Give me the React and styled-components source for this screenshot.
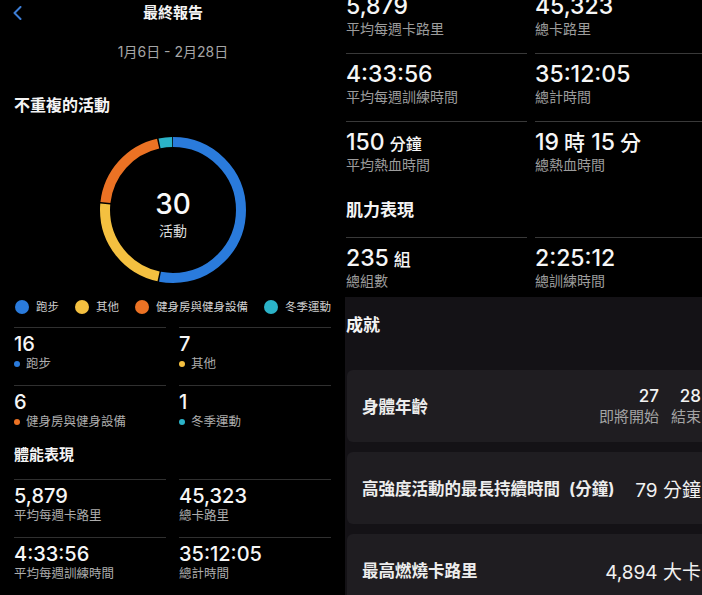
import React from 'react';
import styled, { createGlobalStyle } from 'styled-components';

const GlobalStyle = createGlobalStyle`
  html, body {
    margin: 0;
    padding: 0;
    background: #000;
  }
  body {
    font-family: Inter, "Noto Sans CJK TC", sans-serif;
    color: #f2f2f2;
    -webkit-font-smoothing: antialiased;
  }
`;

const COLORS = {
  run: '#2a7bdc',
  other: '#f4c040',
  gym: '#eb7224',
  winter: '#2bb3c8',
};

const Page = styled.div`
  display: flex;
  width: 702px;
  height: 595px;
  overflow: hidden;
  background: #000;
`;

/* ---------- left phone ---------- */

const LeftPhone = styled.section`
  width: 335px;
  flex-shrink: 0;
  box-sizing: border-box;
  padding: 0 3px 0 14px;
  display: flex;
  flex-direction: column;
`;

const Header = styled.header`
  display: grid;
  grid-template-columns: 30px 1fr 30px;
  align-items: center;
  height: 26px;
`;

const BackButton = styled.button`
  display: flex;
  align-items: center;
  padding: 0;
  margin-left: -1px;
  border: 0;
  background: none;
  color: #3d7ed6;
`;

const Title = styled.h1`
  margin: 0;
  text-align: center;
  font-size: 15px;
  font-weight: 700;
  line-height: 26px;
  color: #f4f4f4;
`;

const DateRange = styled.div`
  margin-top: 16px;
  text-align: center;
  font-size: 14px;
  line-height: 20px;
  color: #a6a6a6;
`;

const SectionTitle = styled.h2`
  margin: ${(p) => p.$top || 0}px 0 ${(p) => p.$bottom || 0}px;
  font-size: ${(p) => p.$size || 16}px;
  font-weight: 700;
  line-height: 22px;
  color: #f4f4f4;
`;

const DonutWrap = styled.div`
  margin-top: 21px;
  display: grid;
  place-items: center;
  height: 146px;
  & > * {
    grid-area: 1 / 1;
  }
`;

const DonutCenter = styled.div`
  display: flex;
  flex-direction: column;
  align-items: center;
  padding-top: 7px;
`;

const DonutValue = styled.div`
  font-size: 28px;
  font-weight: 500;
  line-height: 32px;
  color: #fafafa;
`;

const DonutLabel = styled.div`
  margin-top: 2px;
  font-size: 14px;
  line-height: 18px;
  color: #dcdcdc;
`;

const Legend = styled.ul`
  margin: 16px 0 0;
  padding: 0;
  list-style: none;
  display: flex;
  justify-content: center;
  gap: 16px;
`;

const LegendItem = styled.li`
  display: flex;
  align-items: center;
  gap: 7px;
  font-size: 11.5px;
  line-height: 16px;
  color: #cfcfcf;
`;

const Dot = styled.span`
  width: ${(p) => p.$size}px;
  height: ${(p) => p.$size}px;
  border-radius: 50%;
  background: ${(p) => p.$color};
  flex-shrink: 0;
`;

const StatGrid = styled.div`
  margin-top: ${(p) => p.$top || 0}px;
  display: grid;
  grid-template-columns: 152px 152px;
  column-gap: 13px;
`;

const StatCell = styled.div`
  border-top: 1px solid #303030;
  padding: 4px 0 13px;
`;

const StatValue = styled.div`
  font-size: 20px;
  font-weight: 500;
  line-height: 24px;
  color: #f6f6f6;
`;

const StatLabel = styled.div`
  display: flex;
  align-items: center;
  gap: 6px;
  font-size: 12.5px;
  line-height: 16px;
  color: #adadad;
`;

/* ---------- right phone ---------- */

const RightPhone = styled.section`
  flex: 1;
  min-width: 0;
  display: flex;
  flex-direction: column;
  overflow: hidden;
`;

const RightTop = styled.div`
  height: 297px;
  flex-shrink: 0;
  overflow: hidden;
  padding-left: 11px;
`;

const ScrolledContent = styled.div`
  margin-top: -15px;
`;

const BigGrid = styled.div`
  display: grid;
  grid-template-columns: 181px 181px;
  column-gap: 8px;
`;

const BigCell = styled.div`
  border-top: 1px solid #393939;
  padding: 7px 0 15px;
`;

const BigValue = styled.div`
  height: 26px;
  font-size: 23px;
  font-weight: 500;
  line-height: 26px;
  color: #f6f6f6;
  white-space: nowrap;
`;

const Unit = styled.span`
  font-size: ${(p) => p.$size}px;
  line-height: 1;
  margin-left: 5px;
`;

const BigLabel = styled.div`
  margin-top: 1px;
  font-size: 14px;
  line-height: 18px;
  color: #9c9c9c;
`;

const Achievements = styled.div`
  flex: 1;
  margin-left: 10px;
  padding: 17px 0 0 1px;
  background: #141216;
  display: flex;
  flex-direction: column;
  align-items: flex-start;
`;

const CardList = styled.div`
  margin-top: 34px;
  display: flex;
  flex-direction: column;
  gap: 10px;
`;

const Card = styled.div`
  box-sizing: border-box;
  width: 369px;
  height: 72px;
  margin-left: 1px;
  padding: 0 15px;
  display: flex;
  align-items: center;
  justify-content: space-between;
  background: #1f1d21;
  border-radius: 6px;
`;

const CardTitle = styled.div`
  font-size: 16.5px;
  font-weight: 700;
  color: #ededed;
  white-space: nowrap;
  word-spacing: 5px;
`;

const CardValue = styled.div`
  font-size: 19px;
  color: #f0f0f0;
  white-space: nowrap;
`;

const AgeGroups = styled.div`
  display: flex;
  gap: 12px;
`;

const AgeGroup = styled.div`
  display: flex;
  flex-direction: column;
  align-items: flex-end;
`;

const AgeNumber = styled.div`
  font-size: 17px;
  font-weight: 500;
  line-height: 22px;
  color: #f2f2f2;
`;

const AgeLabel = styled.div`
  font-size: 15px;
  line-height: 20px;
  color: #a4a4a4;
`;

/* ---------- donut chart ---------- */

const segments = [
  { value: 16, color: COLORS.run },
  { value: 7, color: COLORS.other },
  { value: 6, color: COLORS.gym },
  { value: 1, color: COLORS.winter },
];

function Donut() {
  const size = 146;
  const r = 68;
  const c = 2 * Math.PI * r;
  const total = segments.reduce((s, x) => s + x.value, 0);
  const gap = 1.5;
  let offset = 0;
  return (
    <svg width={size} height={size} viewBox={`0 0 ${size} ${size}`}>
      <g transform={`rotate(-90 ${size / 2} ${size / 2})`}>
        {segments.map((s, i) => {
          const len = (s.value / total) * c;
          const el = (
            <circle
              key={i}
              cx={size / 2}
              cy={size / 2}
              r={r}
              fill="none"
              stroke={s.color}
              strokeWidth={10}
              strokeDasharray={`${len - gap} ${c - len + gap}`}
              strokeDashoffset={-offset}
            />
          );
          offset += len;
          return el;
        })}
      </g>
    </svg>
  );
}

function ChevronLeft() {
  return (
    <svg width="9" height="14" viewBox="0 0 9 14">
      <polyline points="7.5,1 1.5,7 7.5,13" fill="none" stroke="currentColor" strokeWidth="2" strokeLinecap="round" strokeLinejoin="round" />
    </svg>
  );
}

const activityCounts = [
  { value: '16', label: '跑步', color: COLORS.run },
  { value: '7', label: '其他', color: COLORS.other },
  { value: '6', label: '健身房與健身設備', color: COLORS.gym },
  { value: '1', label: '冬季運動', color: COLORS.winter },
];

export default function App() {
  return (
    <>
      <GlobalStyle />
      <Page>
        <LeftPhone>
          <Header>
            <BackButton aria-label="返回">
              <ChevronLeft />
            </BackButton>
            <Title>最終報告</Title>
            <span />
          </Header>
          <DateRange>1月6日 - 2月28日</DateRange>

          <SectionTitle $top={32}>不重複的活動</SectionTitle>
          <DonutWrap>
            <Donut />
            <DonutCenter>
              <DonutValue>30</DonutValue>
              <DonutLabel>活動</DonutLabel>
            </DonutCenter>
          </DonutWrap>

          <Legend>
            {activityCounts.map((a) => (
              <LegendItem key={a.label}>
                <Dot $size={14} $color={a.color} />
                {a.label}
              </LegendItem>
            ))}
          </Legend>

          <StatGrid $top={12}>
            {activityCounts.map((a) => (
              <StatCell key={a.label}>
                <StatValue>{a.value}</StatValue>
                <StatLabel>
                  <Dot $size={6} $color={a.color} />
                  {a.label}
                </StatLabel>
              </StatCell>
            ))}
          </StatGrid>

          <SectionTitle $top={1} $bottom={13} $size={15}>體能表現</SectionTitle>
          <StatGrid>
            <StatCell>
              <StatValue>5,879</StatValue>
              <StatLabel>平均每週卡路里</StatLabel>
            </StatCell>
            <StatCell>
              <StatValue>45,323</StatValue>
              <StatLabel>總卡路里</StatLabel>
            </StatCell>
            <StatCell>
              <StatValue>4:33:56</StatValue>
              <StatLabel>平均每週訓練時間</StatLabel>
            </StatCell>
            <StatCell>
              <StatValue>35:12:05</StatValue>
              <StatLabel>總計時間</StatLabel>
            </StatCell>
          </StatGrid>
        </LeftPhone>

        <RightPhone>
          <RightTop>
            <ScrolledContent>
              <BigGrid>
                <BigCell>
                  <BigValue>5,879</BigValue>
                  <BigLabel>平均每週卡路里</BigLabel>
                </BigCell>
                <BigCell>
                  <BigValue>45,323</BigValue>
                  <BigLabel>總卡路里</BigLabel>
                </BigCell>
                <BigCell>
                  <BigValue>4:33:56</BigValue>
                  <BigLabel>平均每週訓練時間</BigLabel>
                </BigCell>
                <BigCell>
                  <BigValue>35:12:05</BigValue>
                  <BigLabel>總計時間</BigLabel>
                </BigCell>
                <BigCell>
                  <BigValue>
                    150<Unit $size={16}>分鐘</Unit>
                  </BigValue>
                  <BigLabel>平均熱血時間</BigLabel>
                </BigCell>
                <BigCell>
                  <BigValue>
                    19<Unit $size={21}>時</Unit> 15<Unit $size={21}>分</Unit>
                  </BigValue>
                  <BigLabel>總熱血時間</BigLabel>
                </BigCell>
              </BigGrid>

              <SectionTitle $top={10} $bottom={16} $size={17}>肌力表現</SectionTitle>
              <BigGrid>
                <BigCell>
                  <BigValue>
                    235<Unit $size={17}>組</Unit>
                  </BigValue>
                  <BigLabel>總組數</BigLabel>
                </BigCell>
                <BigCell>
                  <BigValue>2:25:12</BigValue>
                  <BigLabel>總訓練時間</BigLabel>
                </BigCell>
              </BigGrid>
            </ScrolledContent>
          </RightTop>

          <Achievements>
            <SectionTitle $size={17}>成就</SectionTitle>
            <CardList>
              <Card>
                <CardTitle>身體年齡</CardTitle>
                <AgeGroups>
                  <AgeGroup>
                    <AgeNumber>27</AgeNumber>
                    <AgeLabel>即將開始</AgeLabel>
                  </AgeGroup>
                  <AgeGroup>
                    <AgeNumber>28</AgeNumber>
                    <AgeLabel>結束</AgeLabel>
                  </AgeGroup>
                </AgeGroups>
              </Card>
              <Card>
                <CardTitle>高強度活動的最長持續時間 (分鐘)</CardTitle>
                <CardValue>79 分鐘</CardValue>
              </Card>
              <Card>
                <CardTitle>最高燃燒卡路里</CardTitle>
                <CardValue>4,894 大卡</CardValue>
              </Card>
            </CardList>
          </Achievements>
        </RightPhone>
      </Page>
    </>
  );
}
